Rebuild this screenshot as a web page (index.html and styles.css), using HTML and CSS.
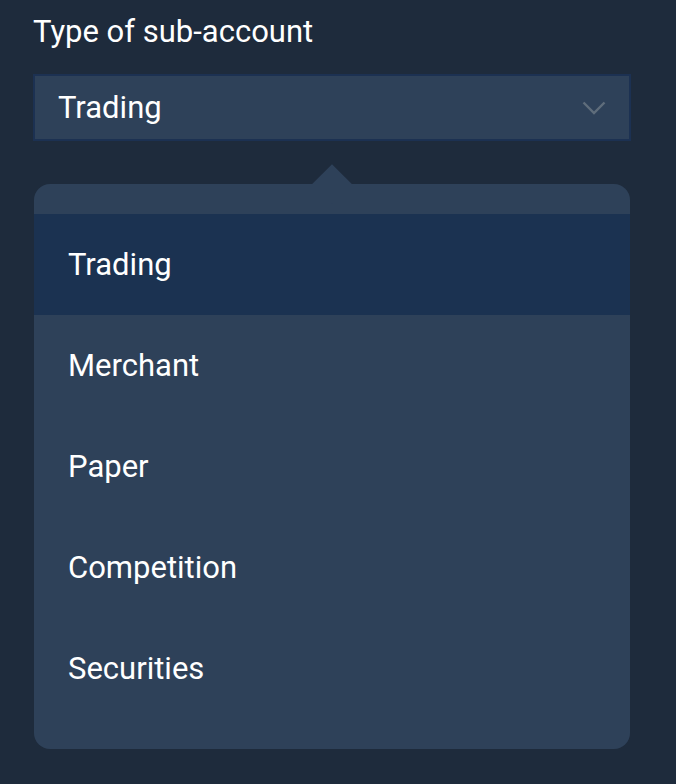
FILE: index.html
```html
<!DOCTYPE html>
<html lang="en">
<head>
    <meta charset="UTF-8">
    <meta name="viewport" content="width=device-width, initial-scale=1.0">
    <title>Type of sub-account</title>
    <link rel="stylesheet" href="styles.css">
</head>
<body>
    <div class="field">
        <label class="field-label">Type of sub-account</label>
        <div class="select">
            <span class="select-value">Trading</span>
            <svg class="chevron" width="24" height="14" viewBox="0 0 24 14">
                <path d="M1.5 1.5 L12 12 L22.5 1.5" fill="none" stroke="#5f6d7b" stroke-width="2.4"/>
            </svg>
        </div>
        <div class="menu">
            <ul class="menu-list">
                <li class="menu-item active">Trading</li>
                <li class="menu-item">Merchant</li>
                <li class="menu-item">Paper</li>
                <li class="menu-item">Competition</li>
                <li class="menu-item">Securities</li>
            </ul>
        </div>
    </div>
</body>
</html>
```

FILE: styles.css
```css
html, body {
    margin: 0;
    padding: 0;
    background: #1e2b3c;
    font-family: Roboto, 'Liberation Sans', Arial, sans-serif;
    color: #ffffff;
}
.field {
    width: 598px;
    padding: 16px 0 0 33px;
}
.field-label {
    display: block;
    font-size: 31px;
    line-height: 32px;
    margin-bottom: 26px;
}
.select {
    box-sizing: border-box;
    height: 67px;
    display: flex;
    align-items: center;
    justify-content: space-between;
    padding: 0 23px 0 23px;
    background: #2e4159;
    border: 2px solid #1c3152;
    font-size: 31px;
}
.chevron {
    display: block;
}
.menu {
    position: relative;
    width: 596px;
    margin: 43px 0 0 1px;
    background: #2e4159;
    border-radius: 16px;
}
.menu::before {
    content: '';
    position: absolute;
    top: -14px;
    left: 284px;
    width: 28px;
    height: 28px;
    background: #2e4159;
    transform: rotate(45deg);
}
.menu-list {
    position: relative;
    list-style: none;
    margin: 0;
    padding: 30px 0;
}
.menu-item {
    height: 101px;
    display: flex;
    align-items: center;
    padding-left: 34px;
    font-size: 31px;
}
.menu-item.active {
    background: #1b3251;
}
```
